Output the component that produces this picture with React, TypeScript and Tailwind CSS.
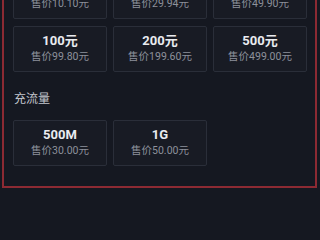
import React from "react";

const font = { fontFamily: "Roboto, 'Noto Sans CJK SC', sans-serif" };

type Item = { t: string; p: string };

function Card({ t, p }: Item) {
  return (
    <div className="h-[46px] rounded-[2px] border border-[#2a2e39] bg-[#181b24] flex flex-col items-center justify-center">
      <div className="text-[13px] leading-[16px] font-bold text-[#e9ebf0]">{t}</div>
      <div className="text-[10.5px] leading-[16px] text-[#8d919b]">{p}</div>
    </div>
  );
}

const hf: Item[] = [
  { t: "10元", p: "售价10.10元" },
  { t: "30元", p: "售价29.94元" },
  { t: "50元", p: "售价49.90元" },
  { t: "100元", p: "售价99.80元" },
  { t: "200元", p: "售价199.60元" },
  { t: "500元", p: "售价499.00元" },
];

const ll: Item[] = [
  { t: "500M", p: "售价30.00元" },
  { t: "1G", p: "售价50.00元" },
];

export default function App() {
  return (
    <div className="w-[320px] h-[240px] overflow-hidden bg-[#151821]" style={font}>
      <div className="ml-[2px] w-[315px] -mt-[41px] border-2 border-[#8c2a33] pt-[12px] pl-[9px] pr-[8px] pb-[20px]">
        <div className="grid grid-cols-3 gap-x-[6px] gap-y-[7px]">
          {hf.map((i) => (
            <Card key={i.t} {...i} />
          ))}
        </div>
        <div className="mt-[19px] mb-[13px] h-[16px] text-[12px] leading-[16px] text-[#c3c6cd] pl-[1px]">充流量</div>
        <div className="grid grid-cols-3 gap-x-[6px]">
          {ll.map((i) => (
            <Card key={i.t} {...i} />
          ))}
        </div>
      </div>
    </div>
  );
}
